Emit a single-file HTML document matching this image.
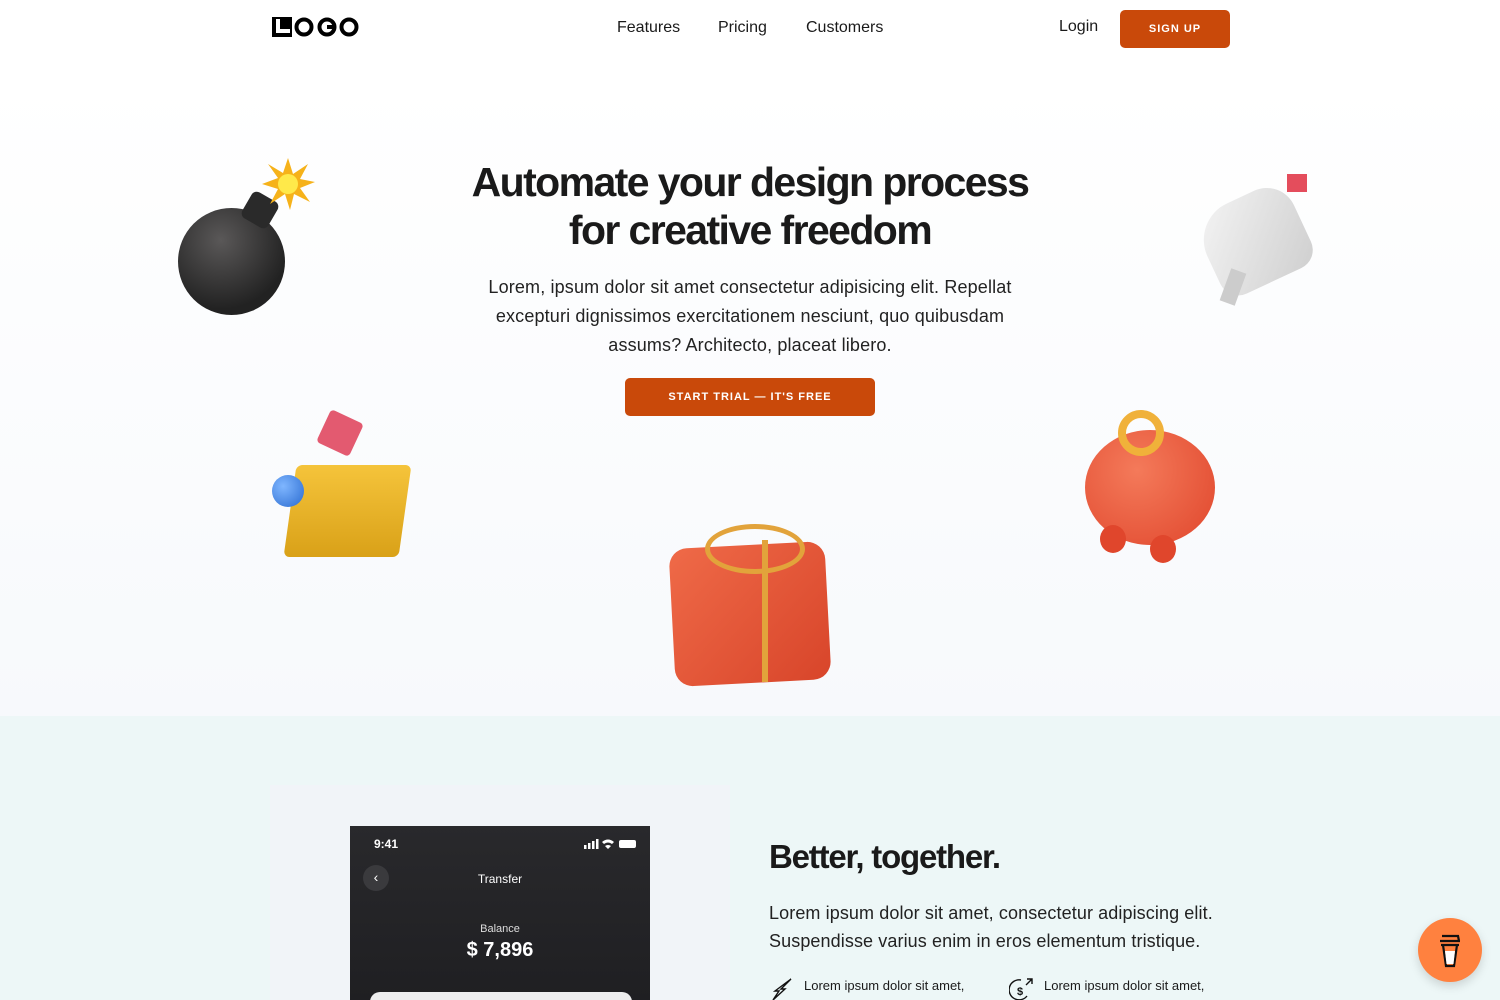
<!DOCTYPE html>
<html><head><meta charset="utf-8"><style>
*{margin:0;padding:0;box-sizing:border-box}
html,body{width:1500px;height:1000px;overflow:hidden}
body{font-family:"Liberation Sans",sans-serif;color:#1a1a1a;position:relative;background:#fff}
.hero{position:absolute;left:0;top:0;width:1500px;height:716px;background:linear-gradient(#fff 0,#fff 80px,#f7f9fc 716px)}
.nav a{position:absolute;font-size:16px;color:#1a1a1a;text-decoration:none}
.btn{position:absolute;background:#c9490a;color:#fff;font-weight:bold;font-size:11px;letter-spacing:1px;display:flex;align-items:center;justify-content:center;border-radius:5px}
h1{position:absolute;left:0;width:1500px;top:158px;text-align:center;font-size:41px;line-height:48px;letter-spacing:-1.6px;font-weight:bold;color:#1a1a1a}
.lead{position:absolute;left:465px;width:570px;top:273px;text-align:center;font-size:18px;line-height:29px;color:#222;letter-spacing:0.15px}
.sec{position:absolute;left:0;top:716px;width:1500px;height:284px;background:#edf7f7}
.abs{position:absolute}
</style></head><body>
<div class="hero"></div>
<svg class="abs" style="left:272px;top:16px" width="88" height="22" viewBox="0 0 88 22">
<rect x="0" y="1" width="20" height="20" fill="#000"/><path d="M6 3 V15 H18" stroke="#fff" stroke-width="4" fill="none"/>
<circle cx="32" cy="11" r="7.5" stroke="#000" stroke-width="4" fill="none"/>
<circle cx="55" cy="11" r="7.5" stroke="#000" stroke-width="4" fill="none"/><path d="M55 11 H63" stroke="#000" stroke-width="4"/>
<circle cx="77" cy="11" r="7.5" stroke="#000" stroke-width="4" fill="none"/></svg>
<div class="nav"><a style="left:617px;top:19px">Features</a><a style="left:718px;top:19px">Pricing</a><a style="left:806px;top:19px">Customers</a><a style="left:1059px;top:18px">Login</a></div>
<div class="btn" style="left:1120px;top:10px;width:110px;height:38px">SIGN UP</div>
<h1>Automate your design process<br>for creative freedom</h1>
<div class="lead">Lorem, ipsum dolor sit amet consectetur adipisicing elit. Repellat excepturi dignissimos exercitationem nesciunt, quo quibusdam assums? Architecto, placeat libero.</div>
<div class="btn" style="left:625px;top:378px;width:250px;height:38px">START TRIAL — IT'S FREE</div>
<!-- bomb -->
<div class="abs" style="left:178px;top:208px;width:107px;height:107px;border-radius:50%;background:radial-gradient(circle at 40% 30%,#5a5858,#222 70%)"></div>
<div class="abs" style="left:245px;top:195px;width:30px;height:30px;border-radius:6px;background:#2a2a2a;transform:rotate(30deg)"></div>
<svg class="abs" style="left:260px;top:156px" width="56" height="56" viewBox="0 0 56 56"><path d="M28 2 L33 18 L48 8 L40 23 L55 26 L40 32 L50 46 L34 38 L30 54 L25 38 L10 48 L18 33 L2 28 L18 22 L8 8 L23 17 Z" fill="#f6b21a"/><circle cx="28" cy="28" r="10" fill="#ffe94a"/></svg>
<!-- mailbox -->
<div class="abs" style="left:1205px;top:195px;width:100px;height:90px;border-radius:40px 30px 20px 20px;background:linear-gradient(135deg,#f4f4f4,#cfcfcf);transform:rotate(-25deg)"></div>
<div class="abs" style="left:1225px;top:270px;width:16px;height:34px;background:#ccc;transform:rotate(20deg)"></div>
<div class="abs" style="left:1287px;top:174px;width:20px;height:18px;background:#e44d5c"></div>
<!-- folder -->
<div class="abs" style="left:290px;top:465px;width:115px;height:92px;background:linear-gradient(#f5c43b,#d9a118);border-radius:6px;transform:skewX(-8deg)"></div>
<div class="abs" style="left:272px;top:475px;width:32px;height:32px;border-radius:50%;background:radial-gradient(circle at 35% 35%,#7fb6ff,#2a6bd0)"></div>
<div class="abs" style="left:322px;top:415px;width:36px;height:36px;background:#e35a70;transform:rotate(25deg);border-radius:4px"></div>
<!-- gift -->
<div class="abs" style="left:672px;top:545px;width:156px;height:138px;border-radius:18px;background:linear-gradient(135deg,#ef6a48,#d8452a);transform:rotate(-3deg)"></div>
<div class="abs" style="left:762px;top:540px;width:6px;height:142px;background:#e2a33b"></div>
<div class="abs" style="left:705px;top:524px;width:100px;height:50px;border:5px solid #e2a33b;border-radius:50%"></div>
<!-- piggy -->
<div class="abs" style="left:1085px;top:430px;width:130px;height:115px;border-radius:50%;background:radial-gradient(circle at 40% 35%,#f47a5a,#e0462c)"></div>
<div class="abs" style="left:1118px;top:410px;width:46px;height:46px;border-radius:50%;border:8px solid #f0b13a"></div>
<div class="abs" style="left:1150px;top:535px;width:26px;height:28px;border-radius:50%;background:#e0462c"></div>
<div class="abs" style="left:1100px;top:525px;width:26px;height:28px;border-radius:50%;background:#e0462c"></div>
<div class="sec"></div>
<div class="abs" style="left:270px;top:785px;width:460px;height:215px;background:#f1f4f8"></div>
<div class="abs" style="left:350px;top:826px;width:300px;height:174px;background:linear-gradient(#29292c,#1f1f22);color:#fff;overflow:hidden">
<div class="abs" style="left:24px;top:11px;font-size:12px;font-weight:bold">9:41</div>
<svg class="abs" style="left:234px;top:12px" width="56" height="12" viewBox="0 0 56 12" fill="#fff"><rect x="0" y="7" width="2.5" height="4"/><rect x="4" y="5" width="2.5" height="6"/><rect x="8" y="3" width="2.5" height="8"/><rect x="12" y="1" width="2.5" height="10"/><path d="M18 4 Q24 -1 30 4 L28 6 Q24 3 20 6 Z M24 11 L21 8 Q24 6 27 8 Z"/><rect x="35" y="2" width="17" height="8" rx="2"/></svg>
<div class="abs" style="left:13px;top:39px;width:26px;height:26px;border-radius:50%;background:#3a3a3d;text-align:center;line-height:24px;font-size:14px">‹</div>
<div class="abs" style="left:0;width:300px;top:46px;text-align:center;font-size:12px">Transfer</div>
<div class="abs" style="left:0;width:300px;top:97px;text-align:center;font-size:11px;color:#ddd">Balance</div>
<div class="abs" style="left:0;width:300px;top:113px;text-align:center;font-size:20px;font-weight:bold">$ 7,896</div>
<div class="abs" style="left:20px;top:166px;width:262px;height:20px;border-radius:14px;background:#eee"></div>
</div>
<div class="abs" style="left:769px;top:838px;font-size:33px;font-weight:bold;letter-spacing:-1.2px">Better, together.</div>
<div class="abs" style="left:769px;top:899px;font-size:18px;line-height:28px;color:#222;letter-spacing:0.1px">Lorem ipsum dolor sit amet, consectetur adipiscing elit.<br>Suspendisse varius enim in eros elementum tristique.</div>
<svg class="abs" style="left:770px;top:977px" width="24" height="24" viewBox="0 0 24 24" fill="none" stroke="#111" stroke-width="1.4"><path d="M21 2 L11 12 L15 12 L3 23 L9 14 L5 14 Z"/></svg>
<div class="abs" style="left:804px;top:978px;font-size:13px">Lorem ipsum dolor sit amet,</div>
<svg class="abs" style="left:1009px;top:977px" width="26" height="24" viewBox="0 0 26 24" fill="none" stroke="#111" stroke-width="1.4"><path d="M18 19 A10 10 0 1 1 12 3"/><path d="M17 8 L23 2 M18 2 L23 2 L23 7"/><text x="8" y="18" font-size="11" font-weight="bold" fill="#111" stroke="none">$</text></svg>
<div class="abs" style="left:1044px;top:978px;font-size:13px">Lorem ipsum dolor sit amet,</div>
<div class="abs" style="left:1418px;top:918px;width:64px;height:64px;border-radius:50%;background:#ff813f;box-shadow:0 4px 10px rgba(0,0,0,.15)">
<svg width="64" height="64" viewBox="0 0 64 64" fill="none" stroke="#111" stroke-width="2.2"><path d="M22 23 H42 M24 18 H40 L41 23 M25 27 L28 48 H36 L39 27 M23 27 H41"/><path d="M27 33 H37 L35.5 46 H28.5 Z" fill="#fff" stroke="none"/></svg></div>
</body></html>
